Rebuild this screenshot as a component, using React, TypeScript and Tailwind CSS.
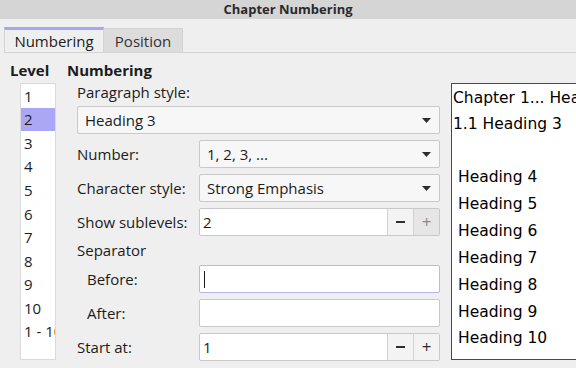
const ui = { fontFamily: '"Open Sans", "Noto Sans", sans-serif' };
const mono = { fontFamily: '"DejaVu Sans", sans-serif' };

const levels = ["1", "2", "3", "4", "5", "6", "7", "8", "9", "10", "1 - 10"];
const preview = ["Heading 4", "Heading 5", "Heading 6", "Heading 7", "Heading 8", "Heading 9", "Heading 10"];

function Arrow() {
  return (
    <svg width="9" height="5" viewBox="0 0 9 5" className="shrink-0">
      <path d="M0 0h9L4.5 5z" fill="#2e2e2e" />
    </svg>
  );
}

function Select({ value, className }: { value: string; className: string }) {
  return (
    <div
      className={`flex items-center justify-between h-[28px] pl-[7px] pr-[8px] bg-[#f7f7f7] border border-[#c9c9c9] rounded-[2px] text-[#1c1c1c] ${className}`}
    >
      <span>{value}</span>
      <Arrow />
    </div>
  );
}

function Spin({ value, plusDisabled }: { value: string; plusDisabled?: boolean }) {
  return (
    <div className="flex w-[241px] h-[28px] border border-[#c9c9c9] rounded-[2px] bg-white">
      <div className="flex-1 flex items-center pl-[3px] text-[#1c1c1c]">{value}</div>
      <div className="w-[26px] flex items-center justify-center border-l border-[#d2d2d2] bg-[#f3f3f3]">
        <div className="w-[9px] h-[2px] bg-[#2e2e2e]" />
      </div>
      <div
        className={`w-[26px] flex items-center justify-center border-l border-[#d2d2d2] text-[17px] ${
          plusDisabled ? "bg-[#e6e6e6] text-[#8a8a8a]" : "bg-[#f3f3f3] text-[#2e2e2e]"
        }`}
      >
        +
      </div>
    </div>
  );
}

function Row({ label, indent, children }: { label: string; indent?: boolean; children: React.ReactNode }) {
  return (
    <div className="flex items-center">
      <div className={`w-[122px] shrink-0 ${indent ? "pl-[10px]" : ""}`}>{label}</div>
      {children}
    </div>
  );
}

export default function App() {
  return (
    <div className="w-[576px] h-[368px] overflow-hidden bg-[#efefef] text-[15px] text-[#1c1c1c]" style={ui}>
      <div className="h-[19px] bg-[#d5d5d5] flex items-center justify-center text-[13px] font-bold text-[#2a2a2a]">
        Chapter Numbering
      </div>

      <div className="pt-[9px] pl-[4px]">
        <div className="flex items-end border-b border-[#d3d3d3] h-[25px]">
          <div className="w-[100px] h-[25px] border-t-[3px] border-[#a8a4ef] bg-[#efefef] border-x border-x-[#d3d3d3] flex items-center justify-center text-[#1c1c1c] pt-[1px]">
            Numbering
          </div>
          <div className="w-[79px] h-[24px] bg-[#dcdcdc] border-t border-r border-[#d3d3d3] flex items-center justify-center text-[#333] pt-[1px]">
            Position
          </div>
        </div>
      </div>

      <div className="flex pt-[6px]">
        <div className="w-[60px] shrink-0 pl-[10px]">
          <div className="font-bold h-[22px] leading-[22px]">Level</div>
          <div className="ml-[10px] mt-[2px] w-[36px] h-[277px] bg-white border border-[#dadada] overflow-hidden">
            {levels.map((l) => (
              <div
                key={l}
                className={`h-[23.6px] flex items-center pl-[3px] whitespace-nowrap ${l === "2" ? "bg-[#aaa8f6]" : ""}`}
              >
                {l}
              </div>
            ))}
          </div>
        </div>

        <div className="w-[391px] shrink-0 pl-[7px]">
          <div className="font-bold h-[22px] leading-[22px]">Numbering</div>
          <div className="pl-[10px] flex flex-col">
            <div className="h-[19px] flex items-center mt-[2px]">Paragraph style:</div>
            <Select value="Heading 3" className="w-[363px] mt-[4px]" />
            <div className="flex flex-col gap-[6px] mt-[6px]">
              <Row label="Number:">
                <Select value="1, 2, 3, ..." className="w-[241px]" />
              </Row>
              <Row label="Character style:">
                <Select value="Strong Emphasis" className="w-[241px]" />
              </Row>
              <Row label="Show sublevels:">
                <Spin value="2" plusDisabled />
              </Row>
            </div>
            <div className="h-[19px] flex items-center mt-[5px]">Separator</div>
            <div className="flex flex-col gap-[6px] mt-[5px]">
              <Row label="Before:" indent>
                <div className="w-[241px] h-[28px] bg-white border border-[#b9b6ec] rounded-[2px] flex items-center pl-[4px]">
                  <div className="w-px h-[17px] bg-[#1c1c1c]" />
                </div>
              </Row>
              <Row label="After:" indent>
                <div className="w-[241px] h-[28px] bg-white border border-[#c9c9c9] rounded-[2px]" />
              </Row>
              <Row label="Start at:">
                <Spin value="1" />
              </Row>
            </div>
          </div>
        </div>

        <div
          className="mt-[24px] w-[160px] h-[277px] bg-white border border-[#4a4a4a] shrink-0 text-[15.5px] text-black whitespace-nowrap"
          style={mono}
        >
          <div className="pl-[1px] pt-[1px] leading-[26px]">Chapter 1... Heading 2</div>
          <div className="pl-[1px] leading-[26px]">1.1 Heading 3</div>
          <div className="pl-[6px] mt-[27px]">
            {preview.map((p) => (
              <div key={p} className="leading-[26.9px]">
                {p}
              </div>
            ))}
          </div>
        </div>
      </div>
    </div>
  );
}
